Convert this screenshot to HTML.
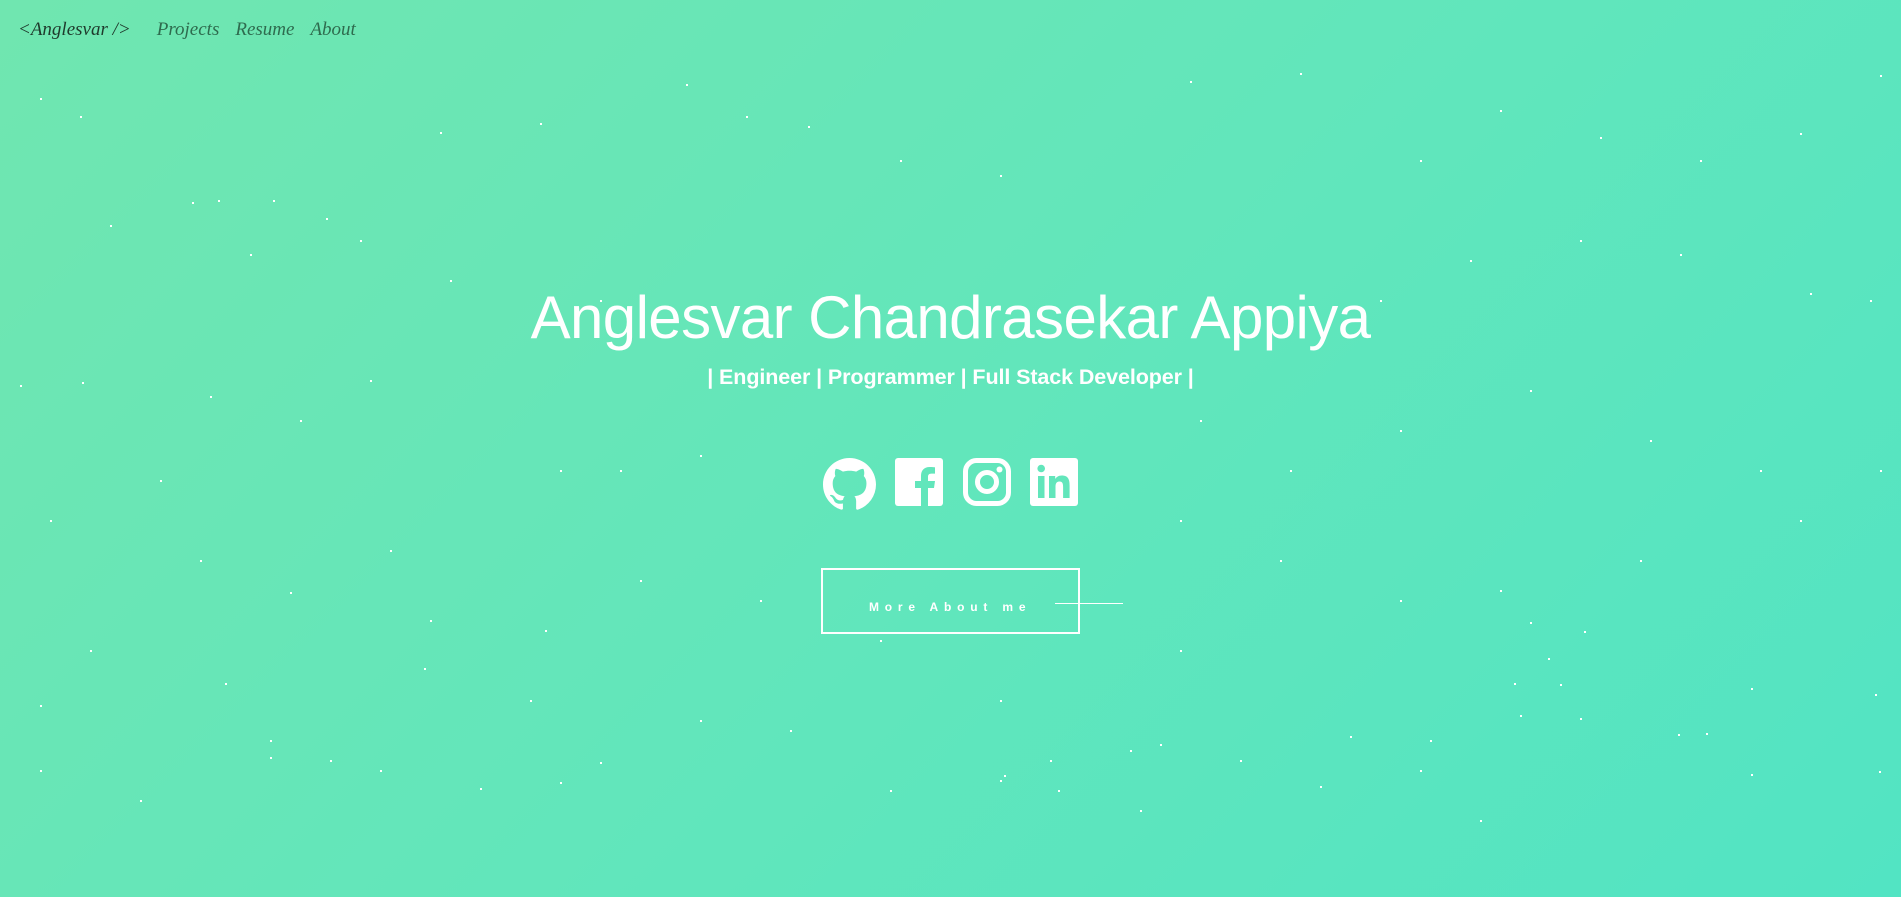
<!DOCTYPE html>
<html><head><meta charset="utf-8">
<style>
html,body{margin:0;padding:0;width:1901px;height:897px;overflow:hidden}
body{background:linear-gradient(135deg,#70e6b0 0%,#62e6bb 50%,#52e4c3 100%);font-family:"Liberation Sans",sans-serif;position:relative;color:#fff}
.nav{position:absolute;top:19px;left:18px;font-family:cursive,"Liberation Serif",serif;font-style:italic;font-size:19px;color:#2e6b4e}
.nav span{margin-right:16px}
.nav .logo{color:#1f3a2c;margin-right:26px}
h1{position:absolute;top:282px;left:0;width:1901px;text-align:center;margin:0;font-weight:300;font-size:60px;letter-spacing:-0.6px;line-height:1.2}
.sub{position:absolute;top:365px;left:0;width:1901px;text-align:center;font-size:21.5px;font-weight:bold;letter-spacing:-0.1px}
.icons{position:absolute;top:458px;left:823px}
.icons svg{position:absolute;top:0}
.btn{position:absolute;left:821px;top:568px;width:255px;height:62px;border:2px solid #fff}
.btn span{position:absolute;left:46px;top:30px;font-size:12px;font-weight:900;letter-spacing:5.8px}
.line{position:absolute;left:1055px;top:603px;width:68px;height:1px;background:#fff}
.stars{position:absolute;left:0;top:0;width:2px;height:2px;background:transparent}
</style></head><body>
<div class="nav"><span class="logo">&lt;Anglesvar /&gt;</span><span>Projects</span><span>Resume</span><span>About</span></div>
<h1>Anglesvar Chandrasekar Appiya</h1>
<div class="sub">| Engineer | Programmer | Full Stack Developer |</div>
<div class="icons">
<svg style="left:0" width="53" height="53" viewBox="0 0 16 16"><path fill="#fff" d="M8 0C3.58 0 0 3.58 0 8c0 3.540 2.29 6.53 5.47 7.590.4.07.55-.17.55-.38 0-.19-.01-.82-.01-1.49-2.01.37-2.53-.49-2.690-.94-.09-.23-.48-.94-.82-1.13-.28-.15-.68-.52-.01-.53.63-.01 1.080.58 1.230.82.72 1.210 1.870.87 2.330.66.07-.52.28-.87.51-1.07-1.78-.2-3.64-.89-3.64-3.950 0-.87.31-1.590.82-2.150-.08-.2-.36-1.020.08-2.120 0 0 .67-.21 2.2.82.64-.18 1.32-.27 2-.27.68 0 1.360.09 2 .27 1.53-1.04 2.2-.82 2.2-.82.44 1.1.16 1.920.08 2.120.51.56.82 1.270.82 2.150 0 3.070-1.870 3.750-3.650 3.950.29.25.54.73.54 1.480 0 1.070-.01 1.930-.01 2.2 0 .21.15.46.55.38A8.013 8.013 0 0016 8c0-4.420-3.580-8-8-8z"/></svg>
<svg style="left:72px" width="48" height="48" viewBox="0 0 48 48"><rect width="48" height="48" rx="3" fill="#fff"/><path fill="#62e6bb" d="M33 48V30h6l1-7h-7v-4c0-2 .6-3.4 3.5-3.4H40V9.3c-.7-.1-2.8-.3-5.4-.3-5.3 0-8.6 3.2-8.6 9v5h-6v7h6v18z"/></svg>
<svg style="left:140px" width="48" height="48" viewBox="0 0 48 48"><rect x="2.5" y="2.5" width="43" height="43" rx="11" fill="none" stroke="#fff" stroke-width="5"/><circle cx="24" cy="24" r="9.5" fill="none" stroke="#fff" stroke-width="5"/><circle cx="36.5" cy="11.5" r="3" fill="#fff"/></svg>
<svg style="left:207px" width="48" height="48" viewBox="0 0 48 48"><rect width="48" height="48" rx="3" fill="#fff"/><rect x="8" y="18" width="6.5" height="22" fill="#62e6bb"/><circle cx="11.2" cy="10.5" r="3.8" fill="#62e6bb"/><path fill="#62e6bb" d="M19 18h6.2v3c1-1.8 3.2-3.5 6.6-3.5 6.6 0 7.8 4.3 7.8 10V40h-6.5V29.3c0-2.6-.1-5.8-3.6-5.8s-4 2.7-4 5.6V40H19z"/></svg>
</div>
<div class="btn"><span>More About me</span></div>
<div class="line"></div>
<div class="stars" style="box-shadow:
1530px 622px #fff,1584px 631px #fff,1548px 658px #fff,1514px 683px #fff,1560px 684px #fff,1751px 688px #fff,1875px 694px #fff,1520px 715px #fff,1580px 718px #fff,1678px 734px #fff,1706px 733px #fff,1751px 774px #fff,1879px 771px #fff,
40px 98px #fff,80px 116px #fff,192px 202px #fff,218px 200px #fff,273px 200px #fff,326px 218px #fff,440px 132px #fff,540px 123px #fff,686px 84px #fff,746px 116px #fff,808px 126px #fff,900px 160px #fff,1000px 175px #fff,1190px 81px #fff,1300px 73px #fff,1420px 160px #fff,1500px 110px #fff,1600px 137px #fff,1700px 160px #fff,1800px 133px #fff,1880px 75px #fff,
110px 225px #fff,250px 254px #fff,360px 240px #fff,450px 280px #fff,600px 300px #fff,1380px 300px #fff,1470px 260px #fff,1580px 240px #fff,1680px 254px #fff,1810px 293px #fff,1870px 300px #fff,
20px 385px #fff,82px 382px #fff,210px 396px #fff,300px 420px #fff,370px 380px #fff,560px 470px #fff,620px 470px #fff,700px 455px #fff,1200px 420px #fff,1290px 470px #fff,1400px 430px #fff,1530px 390px #fff,1650px 440px #fff,1760px 470px #fff,1880px 470px #fff,
50px 520px #fff,160px 480px #fff,200px 560px #fff,290px 592px #fff,390px 550px #fff,430px 620px #fff,545px 630px #fff,640px 580px #fff,760px 600px #fff,1180px 520px #fff,1280px 560px #fff,1400px 600px #fff,1500px 590px #fff,1640px 560px #fff,1800px 520px #fff,
40px 705px #fff,90px 650px #fff,225px 683px #fff,270px 740px #fff,330px 760px #fff,424px 668px #fff,530px 700px #fff,600px 762px #fff,700px 720px #fff,790px 730px #fff,890px 790px #fff,1000px 780px #fff,1130px 750px #fff,1240px 760px #fff,1350px 736px #fff,1430px 740px #fff,
40px 770px #fff,140px 800px #fff,270px 757px #fff,380px 770px #fff,480px 788px #fff,560px 782px #fff,1050px 760px #fff,1160px 744px #fff,1320px 786px #fff,1420px 770px #fff,1480px 820px #fff,
1004px 775px #fff,1058px 790px #fff,1140px 810px #fff,1180px 650px #fff,1000px 700px #fff,880px 640px #fff"></div>
</body></html>
